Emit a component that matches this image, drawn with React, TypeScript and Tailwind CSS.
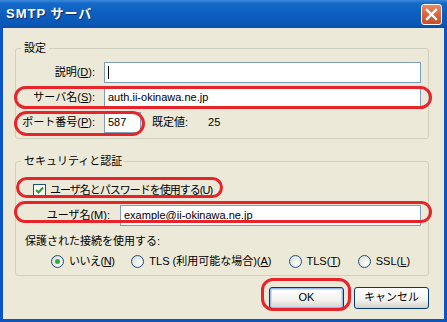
import React from 'react';

// XP style "SMTP サーバ" dialog with red annotation rings

const Ring: React.FC<{ className: string }> = ({ className }) => (
  <div className={`pointer-events-none absolute border-[3px] border-[#e8242b] ${className}`} />
);

const Field: React.FC<{ value?: React.ReactNode; className?: string }> = ({ value, className = '' }) => (
  <div className={`h-[21px] border border-[#7f9db9] bg-white flex items-center pl-[3px] text-[11px] text-black ${className}`}>
    {value}
  </div>
);

const Radio: React.FC<{ checked?: boolean; label: React.ReactNode }> = ({ checked, label }) => (
  <div className="flex items-center gap-[5px]">
    <span className="w-[13px] h-[13px] rounded-full border border-[#1c5180] bg-[radial-gradient(circle_at_70%_70%,#ffffff_0%,#e8e8e1_60%,#d0d0c8_100%)] flex items-center justify-center">
      {checked && <span className="w-[5px] h-[5px] rounded-full bg-[#2fb12f]" />}
    </span>
    <span>{label}</span>
  </div>
);

const Button: React.FC<{ label: string; primary?: boolean }> = ({ label, primary }) => (
  <div
    className={`w-[75px] h-[22px] rounded-[3px] border border-[#003c74] bg-[linear-gradient(to_bottom,#ffffff_0%,#f3f3ee_60%,#d6d0c5_100%)] flex items-center justify-center text-[11px] text-black ${
      primary ? 'shadow-[inset_0_0_0_1px_#9cb8e6,inset_0_0_0_2px_#cddcf3]' : ''
    }`}
  >
    {label}
  </div>
);

export default function App() {
  return (
    <div className="relative w-[447px] h-[322px] flex flex-col bg-[#0b54c2] font-['Liberation_Sans','Noto_Sans_CJK_JP',sans-serif] text-[11px] text-black overflow-hidden">
      {/* title bar */}
      <div className="h-[28px] shrink-0 flex items-center justify-between pl-[6px] pr-[5px] bg-[linear-gradient(to_bottom,#3a88dc_0%,#146ac8_12%,#0c5ebf_50%,#0a58b6_85%,#0a4fa8_100%)]">
        <span className="text-[13px] font-bold text-white tracking-[1px] [text-shadow:1px_1px_0_#0a2f6e]">
          SMTP サーバ
        </span>
        <div className="w-[21px] h-[21px] rounded-[3px] border border-white bg-[linear-gradient(to_bottom,#e88a66_0%,#d9643f_50%,#c4502d_100%)] flex items-center justify-center">
          <svg width="13" height="13" viewBox="0 0 13 13">
            <path d="M2 2 L11 11 M11 2 L2 11" stroke="white" strokeWidth="2.4" strokeLinecap="square" />
          </svg>
        </div>
      </div>

      {/* client area */}
      <div className="flex-1 mx-[3px] mb-[3px] bg-[#ece9d8] flex flex-col pl-[12px] pr-[15px] pt-[13px]">
        <fieldset className="border border-[#d0d0bf] rounded-[3px] pb-[5px] pr-[7px]">
          <legend className="ml-[5px] px-[3px] leading-[14px]">設定</legend>
          <div className="grid grid-cols-[79px_1fr] gap-x-[9px] gap-y-[4px] pt-[7px]">
            <div className="flex items-center justify-end">
              説明(<u>D</u>):
            </div>
            <Field value={<span className="w-px h-[13px] bg-black" />} />
            <div className="flex items-center justify-end">
              サーバ名(<u>S</u>):
            </div>
            <Field value="auth.ii-okinawa.ne.jp" />
            <div className="flex items-center justify-end">
              ポート番号(<u>P</u>):
            </div>
            <div className="flex items-center">
              <Field value="587" className="w-[37px]" />
              <span className="ml-[11px]">既定値:</span>
              <span className="ml-[20px]">25</span>
            </div>
          </div>
        </fieldset>

        <fieldset className="mt-[15px] border border-[#d0d0bf] rounded-[3px] pb-[5px] pr-[7px]">
          <legend className="ml-[5px] px-[3px] leading-[14px]">セキュリティと認証</legend>
          <div className="flex items-center gap-[4px] pl-[17px] pt-[10px] h-[34px]">
            <span className="w-[13px] h-[13px] border border-[#1c5180] bg-white flex items-center justify-center">
              <svg width="9" height="9" viewBox="0 0 9 9">
                <path d="M1 4 L3.5 6.5 L8 1.5" fill="none" stroke="#21a121" strokeWidth="2" />
              </svg>
            </span>
            <span className="tracking-[-1px]">
              ユーザ名とパスワードを使用する(<u>U</u>)
            </span>
          </div>
          <div className="flex items-center mt-[3px]">
            <div className="w-[94px] text-right">
              ユーザ名(<u>M</u>):
            </div>
            <Field value="example@ii-okinawa.ne.jp" className="flex-1 ml-[10px]" />
          </div>
          <div className="pl-[9px] mt-[8px] leading-[14px]">保護された接続を使用する:</div>
          <div className="flex items-center pl-[35px] mt-[5px] gap-[17px]">
            <Radio checked label={<span className="tracking-[-0.5px]">いいえ(<u>N</u>)</span>} />
            <Radio label={<>TLS (利用可能な場合)(<u>A</u>)</>} />
            <Radio label={<>TLS(<u>T</u>)</>} />
            <Radio label={<>SSL(<u>L</u>)</>} />
          </div>
        </fieldset>

        <div className="flex justify-end gap-[10px] mt-[11px]">
          <Button label="OK" primary />
          <Button label="キャンセル" />
        </div>
      </div>

      {/* annotation rings */}
      <Ring className="left-[14px] top-[86px] w-[418px] h-[23px] rounded-full" />
      <Ring className="left-[14px] top-[111px] w-[131px] h-[25px] rounded-full" />
      <Ring className="left-[16px] top-[177px] w-[207px] h-[21px] rounded-full" />
      <Ring className="left-[14px] top-[201px] w-[418px] h-[22px] rounded-full" />
      <Ring className="left-[261px] top-[278px] w-[90px] h-[33px] rounded-[12px]" />
    </div>
  );
}
